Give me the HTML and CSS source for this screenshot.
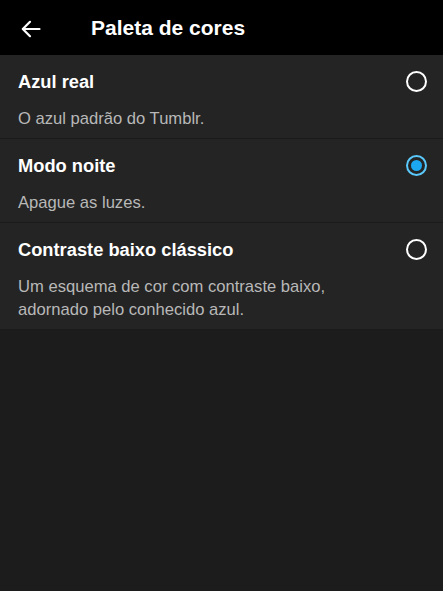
FILE: index.html
```html
<!DOCTYPE html>
<html lang="pt">
<head>
    <meta charset="UTF-8">
    <meta name="viewport" content="width=device-width, initial-scale=1.0">
    <title>Paleta de cores</title>
    <link rel="stylesheet" href="styles.css">
</head>
<body>
    <header class="topbar">
        <button class="back" aria-label="Voltar">
            <svg width="20" height="18" viewBox="0 0 20 18" fill="none" stroke="#fff" stroke-width="2.2" stroke-linecap="round" stroke-linejoin="round">
                <path d="M18.5 9H2"/>
                <path d="M9 1.8L1.8 9L9 16.2"/>
            </svg>
        </button>
        <h1 class="title">Paleta de cores</h1>
    </header>

    <ul class="palettes">
        <li class="palette">
            <div class="palette-text">
                <div class="palette-name">Azul real</div>
                <div class="palette-desc">O azul padrão do Tumblr.</div>
            </div>
            <span class="radio"></span>
        </li>
        <li class="palette">
            <div class="palette-text">
                <div class="palette-name">Modo noite</div>
                <div class="palette-desc">Apague as luzes.</div>
            </div>
            <span class="radio checked"></span>
        </li>
        <li class="palette">
            <div class="palette-text">
                <div class="palette-name">Contraste baixo clássico</div>
                <div class="palette-desc">Um esquema de cor com contraste baixo,<br>adornado pelo conhecido azul.</div>
            </div>
            <span class="radio"></span>
        </li>
    </ul>
</body>
</html>
```

FILE: styles.css
```css
body {
    font-family: "Liberation Sans", Arial, sans-serif;
    background-color: #1c1c1c;
    color: #fff;
    margin: 0;
    padding: 0;
}

.topbar {
    background-color: #000;
    height: 55px;
    display: flex;
    align-items: center;
}

.back {
    background: none;
    border: 0;
    padding: 0;
    margin-left: 21px;
    width: 20px;
    height: 18px;
    display: flex;
    margin-top: 2px;
}

.title {
    margin: 0 0 0 50px;
    font-size: 21px;
    font-weight: bold;
    line-height: 24px;
}

.palettes {
    list-style: none;
    margin: 0;
    padding: 0;
}

.palette {
    background-color: #242424;
    border-bottom: 1px solid #1b1b1b;
    display: flex;
    align-items: flex-start;
    padding: 15px 16px 8px 18px;
}

.palette-text {
    flex: 1;
}

.palette-name {
    font-size: 18.3px;
    font-weight: bold;
    line-height: 24px;
}

.palette-desc {
    margin-top: 13px;
    font-size: 16.6px;
    line-height: 23px;
    color: #b8b8b8;
}

.radio {
    box-sizing: border-box;
    width: 21px;
    height: 21px;
    margin-top: 1px;
    border: 2px solid #fff;
    border-radius: 50%;
    display: flex;
    align-items: center;
    justify-content: center;
}

.radio.checked {
    border: 2.5px solid #5ac8fa;
}

.radio.checked::after {
    content: "";
    width: 11px;
    height: 11px;
    border-radius: 50%;
    background-color: #1ba8f0;
}
```
